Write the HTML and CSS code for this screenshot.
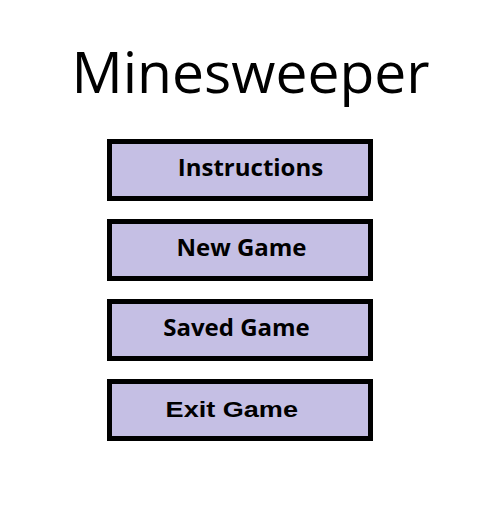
FILE: index.html
```html
<!DOCTYPE html>
<html lang="en">
<head>
  <meta charset="UTF-8">
  <meta name="viewport" content="width=device-width, initial-scale=1.0">
  <link rel="stylesheet" href="styles.css">
</head>
<body>
<div class="menu">
  <h1>Minesweeper</h1>
  <button type="button" class="menu-btn btn-instructions">Instructions</button>
  <button type="button" class="menu-btn btn-new">New Game</button>
  <button type="button" class="menu-btn btn-saved">Saved Game</button>
  <button type="button" class="menu-btn btn-exit"><span>Exit Game</span></button>
</div>
</body>
</html>
```

FILE: styles.css
```css
body {
  margin: 0;
  padding: 0;
  background-color: #fff;
  font-family: "Open Sans", sans-serif;
}
.menu {
  display: flex;
  flex-direction: column;
  align-items: center;
  gap: 18px;
}
h1 {
  margin: 37px 0 16px 22px;
  font-size: 57px;
  font-weight: normal;
  line-height: 1.2;
  color: #000;
}
.menu-btn {
  box-sizing: border-box;
  width: 266px;
  height: 62px;
  margin: 0;
  padding: 0 0 7px 0;
  border: 5px solid #000;
  background-color: #c5bfe4;
  color: #000;
  font-family: "Open Sans", sans-serif;
  font-size: 24px;
  font-weight: bold;
  text-align: center;
}
.btn-instructions {
  padding-left: 22px;
}
.btn-new {
  padding-left: 4px;
}
.btn-saved {
  padding-right: 6px;
}
.btn-exit {
  padding-right: 16px;
  padding-bottom: 0;
  font-family: "Liberation Sans", Arial, sans-serif;
  font-size: 22px;
}
.btn-exit span {
  display: inline-block;
  transform: scaleX(1.23);
}
```
